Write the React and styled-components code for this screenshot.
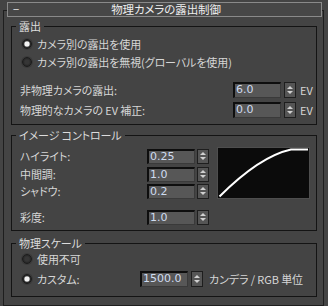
import styled, { createGlobalStyle } from 'styled-components';

const GlobalStyle = createGlobalStyle`
  html, body {
    margin: 0;
    padding: 0;
    background: #444444;
  }
  body {
    font-family: "Noto Sans CJK JP", "Liberation Sans", sans-serif;
    font-size: 11px;
    letter-spacing: -0.1px;
    color: #d6d6d6;
    font-feature-settings: "palt";
  }
`;

const Page = styled.div`
  width: 328px;
  height: 306px;
  padding: 10px 0 0 3px;
  box-sizing: border-box;
  background: #444444;
`;

const Frame = styled.div`
  width: 321px;
  height: 296px;
  box-sizing: border-box;
  border: 1px solid #1e1e1e;
  display: flex;
  flex-direction: column;
  align-items: flex-start;
`;

const TitleBar = styled.div`
  margin: -9px 0 0 3px;
  width: 315px;
  height: 15px;
  box-sizing: border-box;
  border: 1px solid #8a8a8a;
  background: #474747;
  display: flex;
  align-items: center;
  color: #ececec;
  line-height: 13px;
`;

const Collapse = styled.span`
  width: 16px;
  padding-left: 5px;
`;

const TitleText = styled.span`
  flex: 1;
  text-align: center;
  padding-right: 18px;
  font-size: 11.5px;
`;

const Group = styled.div`
  position: relative;
  margin: ${(p) => p.$top}px 0 0 7px;
  width: 306px;
  box-sizing: border-box;
  border: 1px solid #141414;
  padding: ${(p) => p.$pad};
`;

const Legend = styled.span`
  position: absolute;
  top: -9px;
  left: 4px;
  padding: 0 3px;
  line-height: 16px;
  background: #444444;
  color: #dcdcdc;
`;

const RadioRow = styled.div`
  display: flex;
  align-items: center;
  height: 16px;
  padding-left: ${(p) => p.$indent ?? 10}px;
  margin-top: ${(p) => p.$top || 0}px;
`;

const Radio = styled.span`
  width: 10px;
  height: 10px;
  border-radius: 50%;
  box-sizing: border-box;
  border: 1px solid #1c1c1c;
  background: ${(p) =>
    p.$on
      ? 'radial-gradient(circle, #f2f2f2 0 2.2px, #9a9a9a 2.6px, #2a2a2a 3.4px)'
      : 'radial-gradient(circle, #363636 0 2px, #2a2a2a 3.5px)'};
  box-shadow: 0 0 0 1px #3a3a3a;
  margin-right: 5px;
  flex: none;
`;

const Label = styled.span`
  line-height: 16px;
  white-space: nowrap;
`;

const FieldRow = styled.div`
  display: grid;
  grid-template-columns: ${(p) => p.$label}px 48px 12px auto;
  column-gap: ${(p) => p.$gap || 3}px;
  align-items: center;
  height: ${(p) => p.$h || 16}px;
  margin-top: ${(p) => p.$top || 0}px;
  padding-left: ${(p) => p.$indent ?? 8}px;
`;

const Field = styled.div`
  height: ${(p) => p.$h || 16}px;
  box-sizing: border-box;
  border-top: 2px solid #0e0e0e;
  border-left: 2px solid #0e0e0e;
  border-right: 1px solid #3a3a3a;
  border-bottom: 1px solid #3a3a3a;
  background: #575757;
  color: #cfdcf0;
  padding-left: 1px;
  line-height: 12px;
  letter-spacing: 0;
  font-family: "DejaVu Sans", "Liberation Sans", sans-serif;
  font-size: 11px;
`;

const Spin = styled.div`
  height: ${(p) => p.$h || 16}px;
  box-sizing: border-box;
  border: 1px solid #1e1e1e;
  background: #555555;
  display: flex;
  flex-direction: column;
  align-items: center;
  justify-content: space-evenly;
`;

const Arrow = styled.span`
  width: 0;
  height: 0;
  border-left: 3px solid transparent;
  border-right: 3px solid transparent;
  ${(p) => (p.$down ? 'border-top: 3px solid #d0d0d0;' : 'border-bottom: 3px solid #d0d0d0;')}
`;

const Unit = styled.span`
  font-size: 11px;
  color: #d6d6d6;
  margin-left: ${(p) => p.$shift || 1}px;
  white-space: nowrap;
`;

const Split = styled.div`
  display: flex;
  align-items: flex-start;
`;

const Column = styled.div`
  display: flex;
  flex-direction: column;
`;

const CurveBox = styled.div`
  margin: 11px 0 0 6px;
  width: 93px;
  height: 52px;
  box-sizing: border-box;
  border: 1px solid #4e4e4e;
  background: #0b0b0b;
`;

const Spinner = ({ h }) => (
  <Spin $h={h}>
    <Arrow />
    <Arrow $down />
  </Spin>
);

const App = () => (
  <Page>
    <GlobalStyle />
    <Frame>
      <TitleBar>
        <Collapse>−</Collapse>
        <TitleText>物理カメラの露出制御</TitleText>
      </TitleBar>

      <Group $top={9} $pad="9px 0 6px">
        <Legend>露出</Legend>
        <RadioRow>
          <Radio $on />
          <Label>カメラ別の露出を使用</Label>
        </RadioRow>
        <RadioRow $top={2}>
          <Radio />
          <Label>カメラ別の露出を無視(グローバルを使用)</Label>
        </RadioRow>
        <FieldRow $label={210} $top={12}>
          <Label>非物理カメラの露出:</Label>
          <Field>6.0</Field>
          <Spinner />
          <Unit>EV</Unit>
        </FieldRow>
        <FieldRow $label={210} $top={4}>
          <Label>物理的なカメラの EV 補正:</Label>
          <Field>0.0</Field>
          <Spinner />
          <Unit>EV</Unit>
        </FieldRow>
      </Group>

      <Group $top={10} $pad="0 0 6px">
        <Legend>イメージ コントロール</Legend>
        <Split>
          <Column>
            <FieldRow $label={125} $gap={2} $h={15} $top={12}>
              <Label>ハイライト:</Label>
              <Field $h={15}>0.25</Field>
              <Spinner h={15} />
            </FieldRow>
            <FieldRow $label={125} $gap={2} $h={15} $top={3}>
              <Label>中間調:</Label>
              <Field $h={15}>1.0</Field>
              <Spinner h={15} />
            </FieldRow>
            <FieldRow $label={125} $gap={2} $h={15} $top={2}>
              <Label>シャドウ:</Label>
              <Field $h={15}>0.2</Field>
              <Spinner h={15} />
            </FieldRow>
            <FieldRow $label={125} $gap={2} $h={15} $top={11}>
              <Label>彩度:</Label>
              <Field $h={15}>1.0</Field>
              <Spinner h={15} />
            </FieldRow>
          </Column>
          <CurveBox>
            <svg width="91" height="50" viewBox="0 0 91 50">
              <path
                d="M1.5 48.5 C 22 28, 48 7, 73 1.5 L 90 1.5"
                fill="none"
                stroke="#ffffff"
                strokeWidth="2"
              />
            </svg>
          </CurveBox>
        </Split>
      </Group>

      <Group $top={12} $pad="7px 0 9px">
        <Legend>物理スケール</Legend>
        <RadioRow>
          <Radio />
          <Label>使用不可</Label>
        </RadioRow>
        <FieldRow $label={115} $gap={3} $top={4} $indent={10}>
          <RadioRow $indent={0}>
            <Radio $on />
            <Label>カスタム:</Label>
          </RadioRow>
          <Field>1500.0</Field>
          <Spinner />
          <Unit $shift={3}>カンデラ / RGB 単位</Unit>
        </FieldRow>
      </Group>
    </Frame>
  </Page>
);

export default App;
